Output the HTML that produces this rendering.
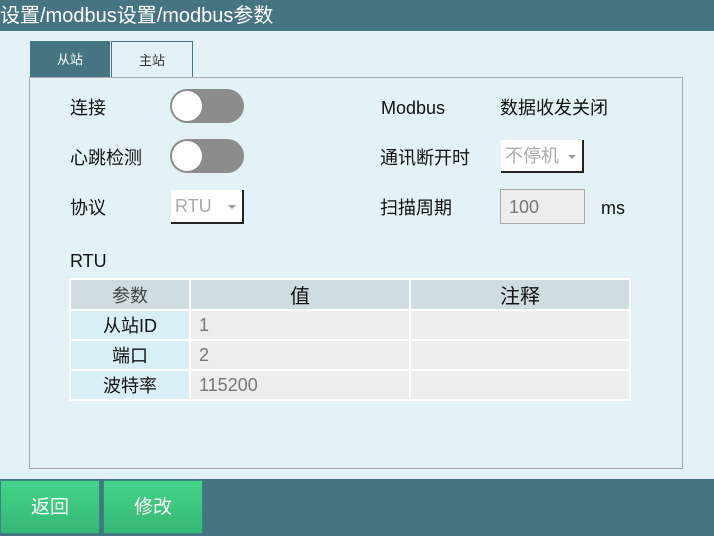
<!DOCTYPE html><html><head><meta charset="utf-8"><style>
*{margin:0;padding:0;box-sizing:border-box}
body{width:714px;height:536px;background:#e2f2f7;position:relative;overflow:hidden;font-family:"Liberation Sans","Noto Sans CJK SC",sans-serif;color:#111}
.a{position:absolute}
.hdr{left:0;top:0;width:714px;height:31px;background:#477482;color:#fff;font-size:20px;line-height:33px;padding-left:0}
.tab{top:41px;height:36px;font-size:13px;text-align:center;line-height:38px}
.lbl{font-size:18px;line-height:22px}
.tg{width:74px;height:34px;border-radius:17px;background:#8c8c8c}
.tg::after{content:"";position:absolute;left:2px;top:2px;width:30px;height:30px;border-radius:50%;background:#fff}
.dd{background:#fff;color:#aaa;font-size:18px;line-height:33px;padding-left:4px;border-right:2px solid #222;border-bottom:2px solid #222}
.dd i{position:absolute;right:6px;top:15px;border:4px solid transparent;border-top:4px solid #999;border-bottom:0}
table{position:absolute;left:69px;top:278px;border-collapse:collapse}
td{border:2px solid #fff;height:30px;font-size:18px;padding:0}
.h td{background:#cfdce1;text-align:center;font-size:20px}
.c1{background:#d8eff6;text-align:center;width:120px}
.v{background:#ededed;color:#777;padding-left:8px;width:220px}
.n{background:#ededed;width:220px}
.btn{top:481px;height:52px;width:98px;background:linear-gradient(#44d488,#36b877);color:#fff;font-size:19px;text-align:center;line-height:54px;box-shadow:0 0 2px #2a8;}
</style></head><body>
<div class="a hdr">设置/modbus设置/modbus参数</div>
<div class="a tab" style="left:30px;width:80px;background:#477482;color:#fff">从站</div>
<div class="a tab" style="left:111px;width:82px;border:1px solid #477482;border-bottom:none;color:#333">主站</div>
<div class="a" style="left:29px;top:77px;width:654px;height:392px;border:1px solid #aaa"></div>
<div class="a lbl" style="left:70px;top:97px">连接</div>
<div class="a tg" style="left:170px;top:89px"></div>
<div class="a lbl" style="left:70px;top:147px">心跳检测</div>
<div class="a tg" style="left:170px;top:139px"></div>
<div class="a lbl" style="left:70px;top:197px">协议</div>
<div class="a dd" style="left:171px;top:190px;width:73px;height:34px">RTU<i></i></div>
<div class="a lbl" style="left:381px;top:97px">Modbus</div>
<div class="a lbl" style="left:500px;top:97px">数据收发关闭</div>
<div class="a lbl" style="left:380px;top:147px;width:90px;overflow:hidden;white-space:nowrap">通讯断开时</div>
<div class="a dd" style="left:501px;top:140px;width:83px;height:33px">不停机<i></i></div>
<div class="a lbl" style="left:380px;top:197px">扫描周期</div>
<div class="a" style="left:500px;top:189px;width:85px;height:35px;background:#ededed;border:1px solid #aaa;color:#777;font-size:18px;line-height:35px;padding-left:8px">100</div>
<div class="a lbl" style="left:601px;top:197px">ms</div>
<div class="a lbl" style="left:70px;top:250px">RTU</div>
<table>
<tr class="h"><td style="color:#444;font-size:18px">参数</td><td>值</td><td>注释</td></tr>
<tr><td class="c1">从站ID</td><td class="v">1</td><td class="n"></td></tr>
<tr><td class="c1">端口</td><td class="v">2</td><td class="n"></td></tr>
<tr><td class="c1">波特率</td><td class="v">115200</td><td class="n"></td></tr>
</table>
<div class="a" style="left:0;top:479px;width:714px;height:57px;background:#477482"></div>
<div class="a btn" style="left:1px">返回</div>
<div class="a btn" style="left:104px">修改</div>
</body></html>
